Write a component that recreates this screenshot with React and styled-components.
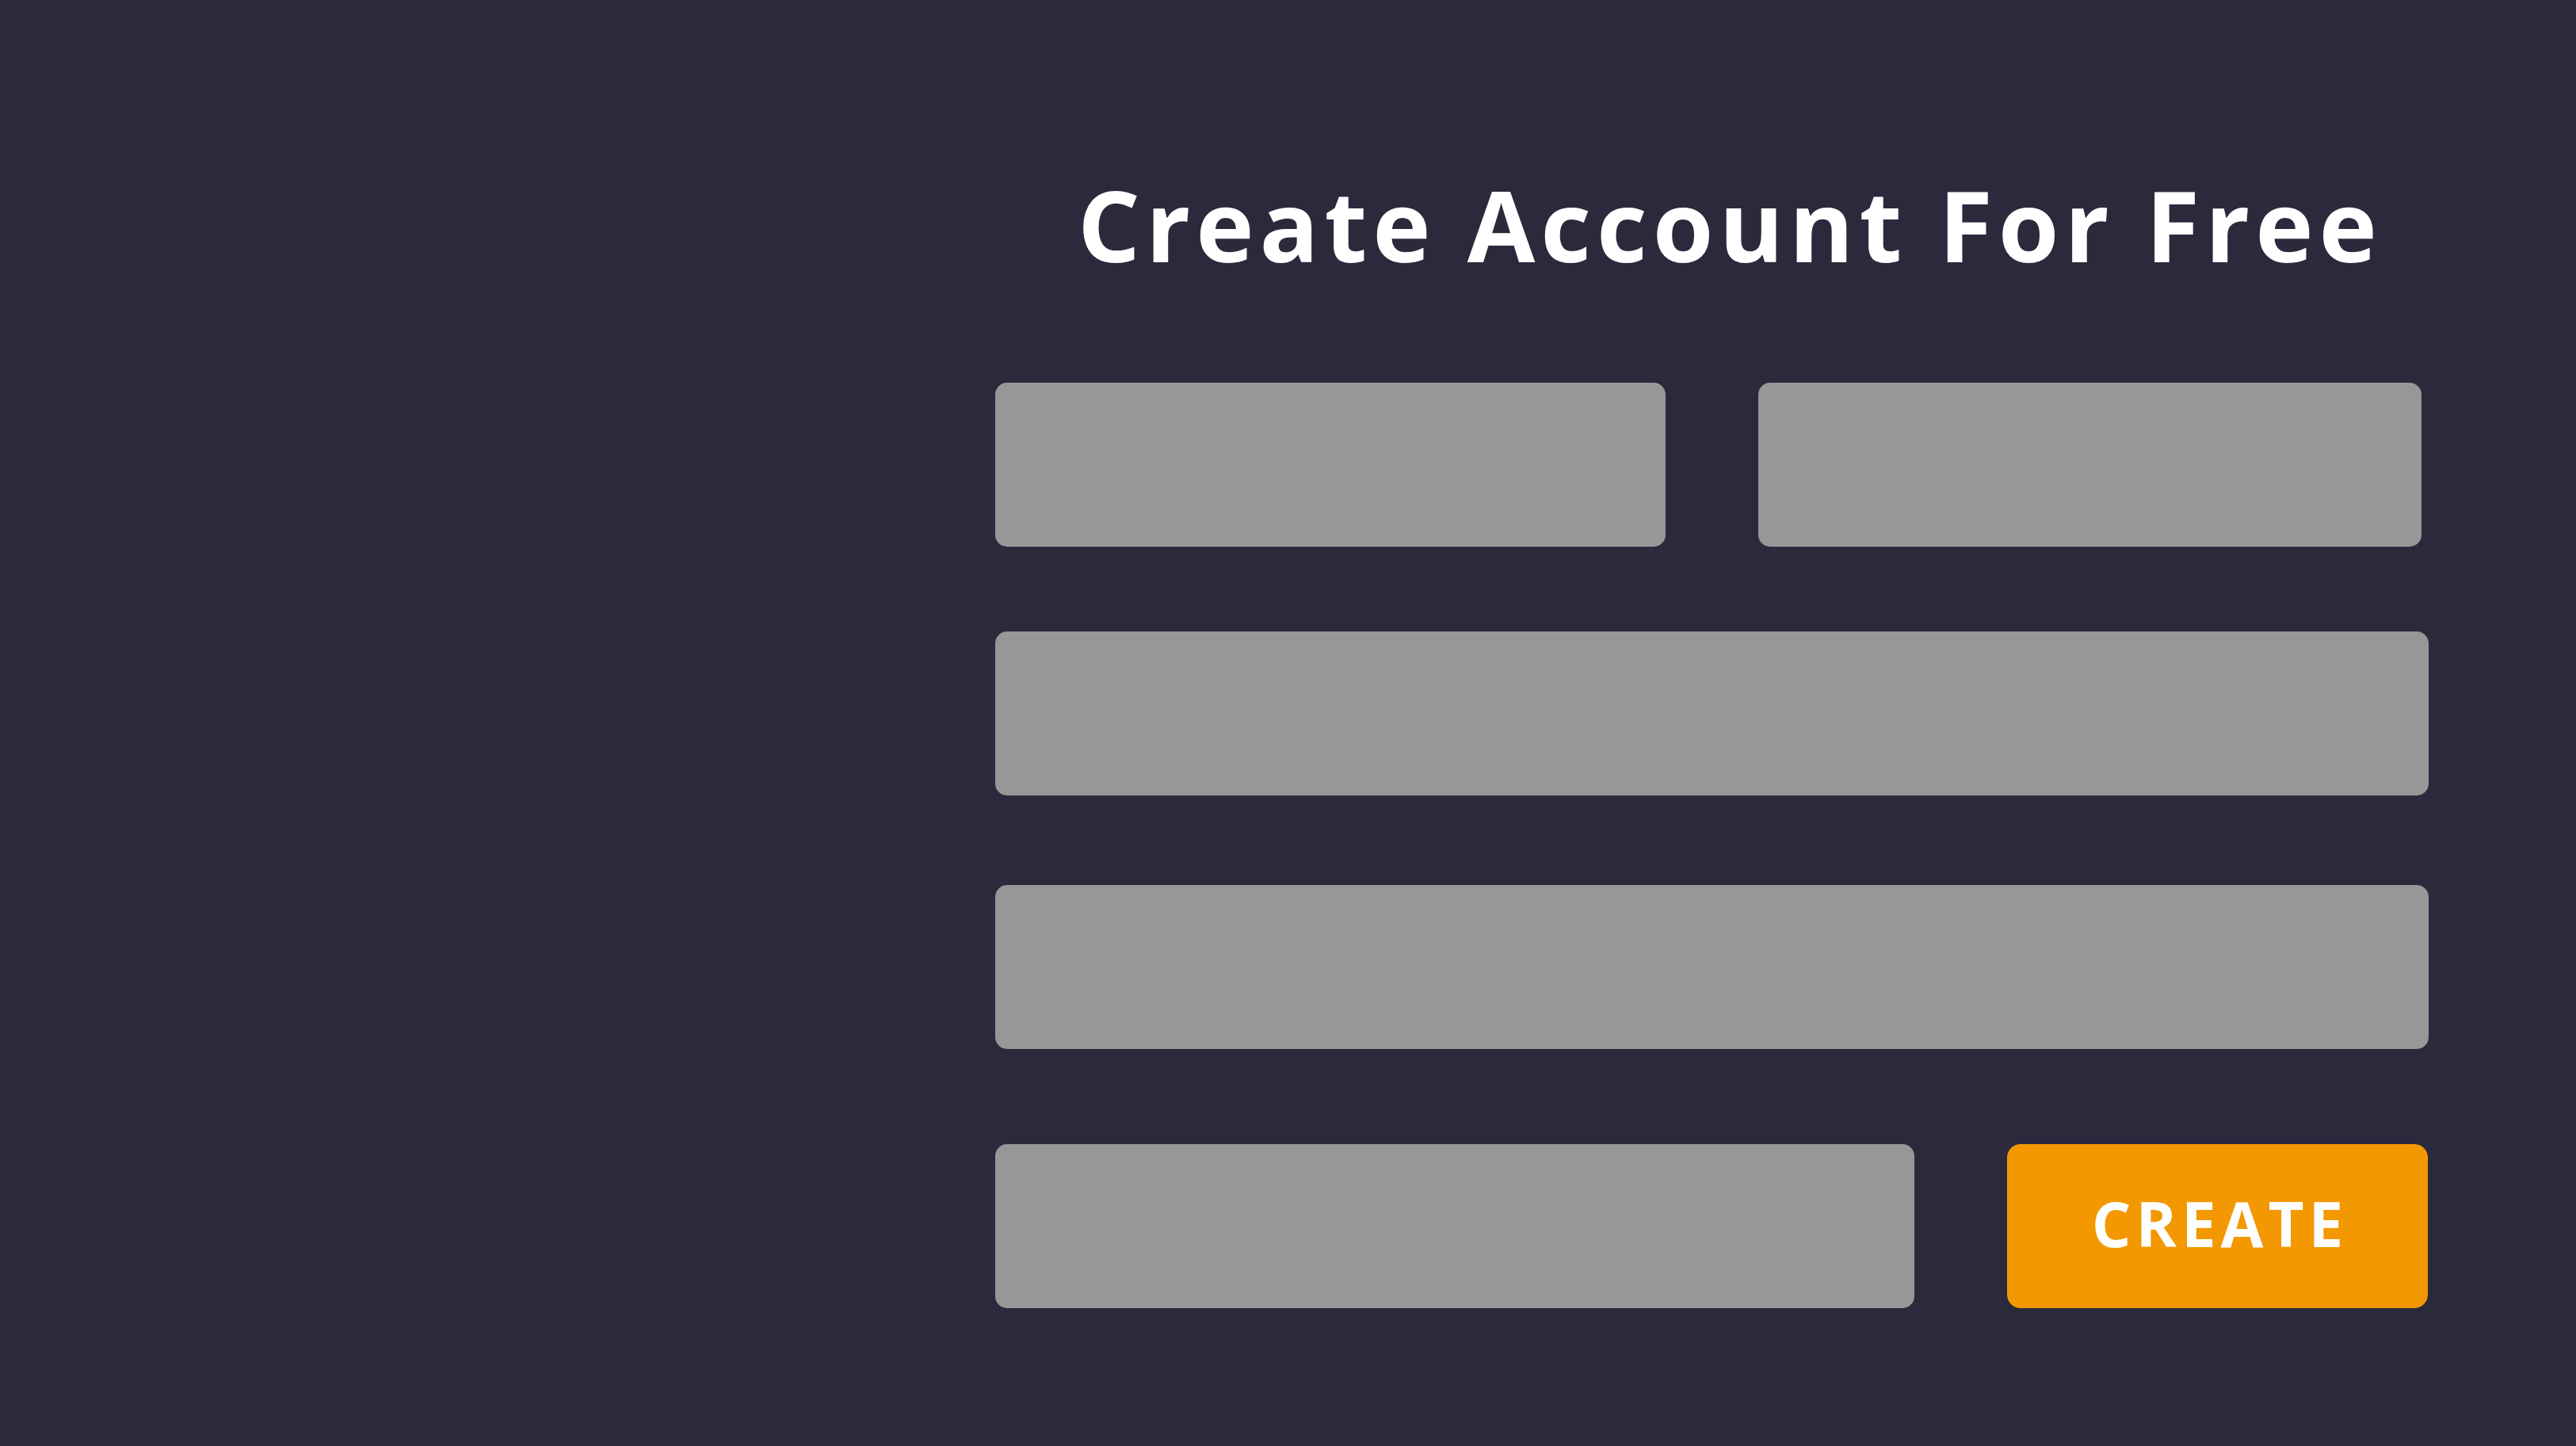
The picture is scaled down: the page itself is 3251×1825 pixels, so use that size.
import React from "react";
import styled, { createGlobalStyle } from "styled-components";

const GlobalStyle = createGlobalStyle`
  html, body {
    margin: 0;
    padding: 0;
    background: #2b2a3d;
  }
`;

const Page = styled.main`
  width: 3251px;
  height: 1825px;
  box-sizing: border-box;
  background: #2b2a3d;
  padding: 221px 0 0 1256px;
  font-family: "Open Sans", "Liberation Sans", sans-serif;
`;

const Form = styled.form`
  width: 1809px;
  display: flex;
  flex-direction: column;
`;

const Title = styled.h1`
  margin: 0 0 0 104px;
  height: 262px;
  color: #ffffff;
  font-size: 124px;
  font-weight: 700;
  line-height: 1;
  letter-spacing: 7px;
  white-space: nowrap;
`;

const Row = styled.div`
  display: grid;
  grid-template-columns: ${(p) => p.$cols};
  column-gap: 117px;
  margin-top: ${(p) => p.$gap || 0}px;
  height: 207px;
`;

const Field = styled.div`
  background: #989697;
  border-radius: 15px;
`;

const Button = styled.button`
  border: none;
  border-radius: 17px;
  background: #f39800;
  color: #ffffff;
  font-family: "Open Sans", "Liberation Sans", sans-serif;
  font-size: 78px;
  font-weight: 700;
  letter-spacing: 6px;
  padding: 0 0 8px 6px;
  cursor: pointer;
`;

const App = () => {
  return (
    <>
      <GlobalStyle />
      <Page>
        <Form onSubmit={(e) => e.preventDefault()}>
          <Title>Create Account For Free</Title>
          <Row $cols="846px 837px">
            <Field />
            <Field />
          </Row>
          <Row $cols="1fr" $gap={107}>
            <Field />
          </Row>
          <Row $cols="1fr" $gap={113}>
            <Field />
          </Row>
          <Row $cols="1160px 531px" $gap={120}>
            <Field />
            <Button type="submit">CREATE</Button>
          </Row>
        </Form>
      </Page>
    </>
  );
};

export default App;
